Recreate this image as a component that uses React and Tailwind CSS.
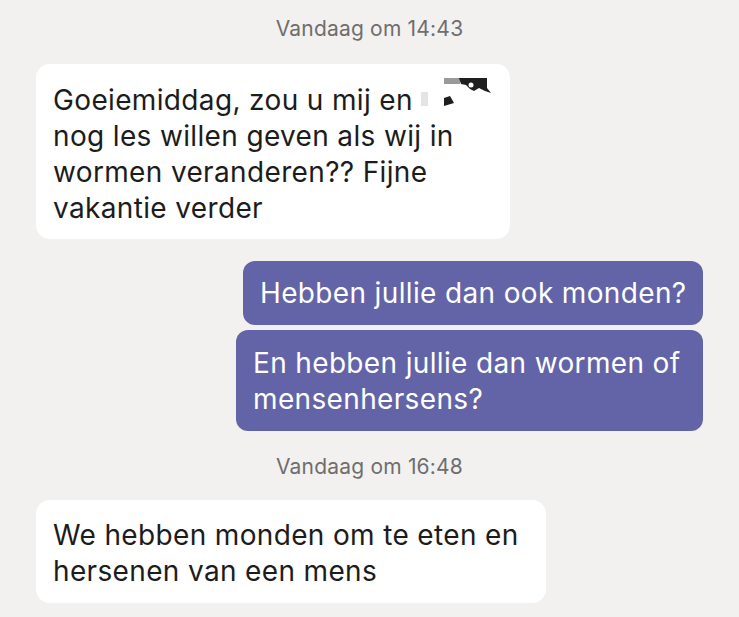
import React from "react";

const font = { fontFamily: '"Inter", "Liberation Sans", sans-serif' };

function Redacted() {
  return (
    <span className="relative inline-block w-[70px] h-[1px]">
      <svg width="70" height="30" viewBox="0 0 70 30" className="absolute left-0 bottom-[2px]">
        <rect x="0" y="14" width="7" height="14" fill="#e4e4e4" />
        <rect x="23" y="0" width="16" height="6" fill="#9a9a9a" />
        <path d="M38 0 L66 0 L66 10 L70 15 L64 13 L58 10 L53 13 L49 11 L45 7 L40 6 Z" fill="#1e1e1e" />
        <path d="M23 20 L29 18 L33 25 L23 28 Z" fill="#1e1e1e" />
        <circle cx="50" cy="7" r="2.5" fill="#ffffff" />
      </svg>
    </span>
  );
}

export default function App() {
  return (
    <div
      className="w-[739px] h-[617px] overflow-hidden bg-[#f2f1f0] px-[36px] pt-[16px] flex flex-col"
      style={font}
    >
      <div className="text-center text-[21px] leading-[26px] tracking-[0.2px] text-[#6e6e6e]">Vandaag om 14:43</div>

      <div className="mt-[22px] w-[474px] rounded-[14px] bg-white px-[17px] pt-[18px] pb-[13px] text-[28px] leading-[36px] tracking-[0.35px] text-[#1c1c1c] whitespace-nowrap">
        Goeiemiddag, zou u mij en <Redacted />
        <br />
        nog les willen geven als wij in
        <br />
        wormen veranderen?? Fijne
        <br />
        vakantie verder
      </div>

      <div className="mt-[22px] self-end w-[460px] rounded-[12px] bg-[#6264a7] px-[17px] pt-[14px] pb-[14px] text-[28px] leading-[36px] tracking-[0.35px] text-white whitespace-nowrap">
        Hebben jullie dan ook monden?
      </div>

      <div className="mt-[5px] self-end w-[467px] rounded-[12px] bg-[#6264a7] px-[17px] pt-[15px] pb-[14px] text-[28px] leading-[36px] tracking-[0.35px] text-white whitespace-nowrap">
        En hebben jullie dan wormen of
        <br />
        mensenhersens?
      </div>

      <div className="mt-[23px] text-center text-[21px] leading-[26px] tracking-[0.2px] text-[#6e6e6e]">Vandaag om 16:48</div>

      <div className="mt-[20px] w-[510px] rounded-[14px] bg-white px-[17px] pt-[17px] pb-[14px] text-[28px] leading-[36px] tracking-[0.35px] text-[#1c1c1c] whitespace-nowrap">
        We hebben monden om te eten en
        <br />
        hersenen van een mens
      </div>
    </div>
  );
}
